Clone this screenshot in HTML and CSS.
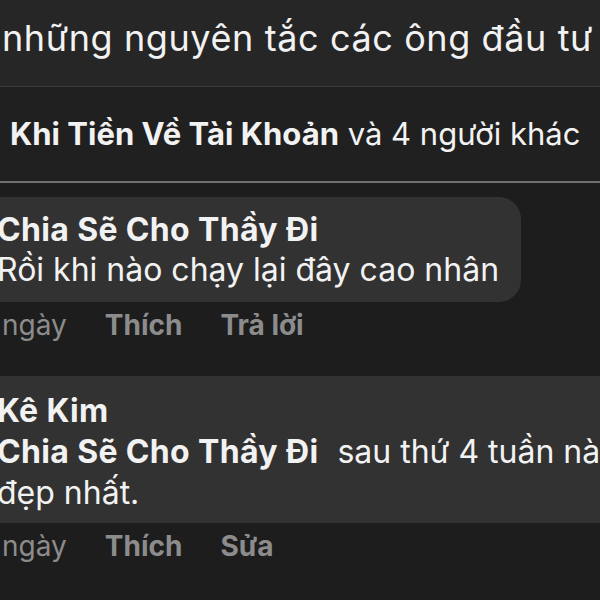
FILE: index.html
```html
<!DOCTYPE html>
<html lang="vi">
<head>
  <meta charset="UTF-8" />
  <meta name="viewport" content="width=device-width, initial-scale=1.0"/>
  <title>Bình luận</title>
  <link rel="stylesheet" href="styles.css">
</head>
<body>
  <div class="screen">
    <div class="post-title">những nguyên tắc các ông đầu tư</div>

    <div class="reactions">
      <b>Khi Tiền Về Tài Khoản</b> và 4 người khác
    </div>

    <div class="comments">
      <div class="comment">
        <div class="bubble">
          <div class="author">Chia Sẽ Cho Thầy Đi</div>
          <div class="text">Rồi khi nào chạy lại đây cao nhân</div>
        </div>
        <div class="actions">
          <span class="time">ngày</span>
          <span class="link">Thích</span>
          <span class="link">Trả lời</span>
        </div>
      </div>

      <div class="comment own">
        <div class="bubble">
          <div class="author">Kê Kim</div>
          <div class="text"><b class="tag">Chia Sẽ Cho Thầy Đi</b> sau thứ 4 tuần này đẹp nhất.</div>
        </div>
        <div class="actions">
          <span class="time">ngày</span>
          <span class="link">Thích</span>
          <span class="link">Sửa</span>
        </div>
      </div>
    </div>
  </div>
</body>
</html>
```

FILE: styles.css
```css
body {
  margin: 0;
  background: #1d1d1d;
  font-family: Inter, "Noto Sans", sans-serif;
  color: #f2f2f2;
  overflow: hidden;
}
.screen {
  width: 600px;
  height: 600px;
  overflow: hidden;
}
.post-title {
  height: 87px;
  box-sizing: border-box;
  padding: 18px 0 0 2px;
  background: #262626;
  border-bottom: 1px solid #3a3a3a;
  font-size: 36px;
  letter-spacing: 0.6px;
  line-height: 40px;
  white-space: nowrap;
}
.reactions {
  height: 96px;
  box-sizing: border-box;
  padding: 27px 0 0 10px;
  background: #202020;
  border-bottom: 2px solid #707070;
  font-size: 31px;
  line-height: 40px;
  white-space: nowrap;
}
.reactions b {
  font-weight: 700;
}
.comments {
  padding-top: 14px;
  font-size: 32px;
}
.bubble {
  background: #323232;
  border-radius: 22px;
  margin-left: -30px;
  width: 551px;
  box-sizing: border-box;
  padding: 13px 0 12px 27px;
  line-height: 40px;
}
.author, .tag {
  font-weight: 700;
  letter-spacing: 0.35px;
}
.tag {
  margin-right: 10px;
}
.actions {
  display: flex;
  gap: 38px;
  margin-top: 3px;
  line-height: 40px;
  padding-left: 2px;
  font-size: 28px;
  color: #8c8c8c;
}
.actions .link {
  font-weight: 700;
}
.own {
  margin-top: 31px;
}
.own .bubble {
  width: 720px;
  border-radius: 0;
  padding: 14px 0 10px 27px;
  line-height: 41px;
}
.own .text {
  width: 660px;
}
```
